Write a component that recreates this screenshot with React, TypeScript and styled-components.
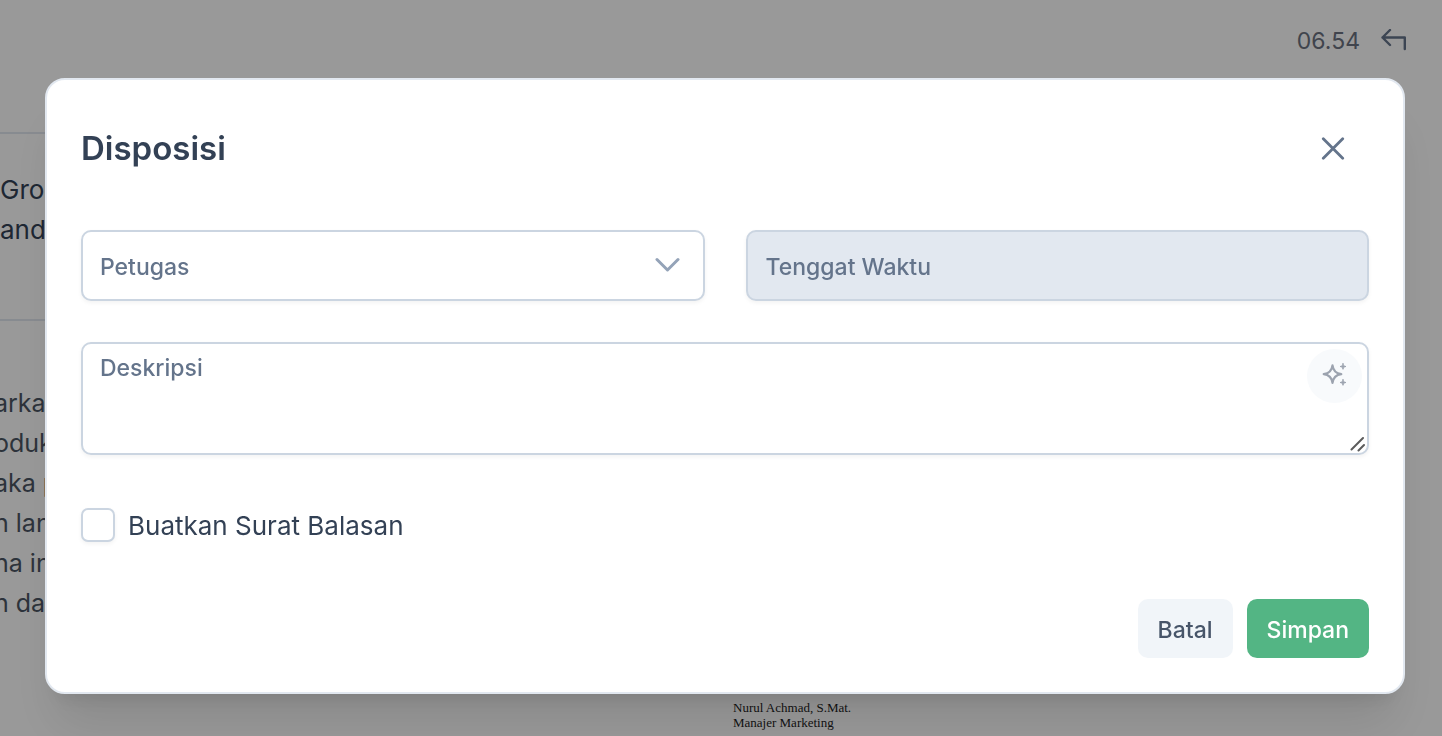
import React from "react";
import styled, { createGlobalStyle } from "styled-components";

const GlobalStyle = createGlobalStyle`
  *, *::before, *::after { box-sizing: border-box; }
  body {
    margin: 0;
    background: #ffffff;
    font-family: Inter, "Liberation Sans", sans-serif;
    overflow: hidden;
  }
  button, input, select, textarea { font: inherit; }
`;

const Page = styled.main`
  display: flex;
  flex-direction: column;
  min-height: 100vh;
  overflow: hidden;
`;

const MailMeta = styled.header`
  display: flex;
  align-items: center;
  justify-content: flex-end;
  gap: 20px;
  height: 132px;
  padding: 0 34px 50px 0;
  color: #6b7280;
`;

const Time = styled.time`
  font-size: 23px;
  line-height: 32px;
`;

const ReplyButton = styled.button`
  display: flex;
  padding: 0;
  border: 0;
  background: none;
  color: #64748b;
`;

const Recipients = styled.section`
  height: 189px;
  margin-right: 74px;
  padding-top: 36px;
  border: solid #e2e8f0;
  border-width: 2px 0;
  color: #334155;
  font-size: 26px;
  line-height: 40px;
`;

const MailBody = styled.section`
  height: 379px;
  margin-left: -6px;
  padding-top: 62px;
  color: #4b5563;
  font-size: 25px;
  line-height: 40px;
`;

const TextLine = styled.div`
  white-space: nowrap;
`;

const Signature = styled.address`
  align-self: center;
  width: 117px;
  margin-left: 141px;
  color: #1c1c1c;
  font-family: "Liberation Serif", serif;
  font-size: 13px;
  font-style: normal;
  line-height: 15px;
  white-space: nowrap;
`;

const Overlay = styled.div`
  position: fixed;
  inset: 0;
  display: flex;
  align-items: flex-start;
  padding: 78px 37px 42px 45px;
  background: rgba(0, 0, 0, 0.4);
`;

const Dialog = styled.form`
  flex: 1;
  display: flex;
  flex-direction: column;
  padding: 34px;
  border: 2px solid #e2e8f0;
  border-radius: 20px;
  background: #ffffff;
  box-shadow: 0 40px 50px -10px rgba(0, 0, 0, 0.1), 0 16px 20px -12px rgba(0, 0, 0, 0.1);
  color: #334155;
`;

const DialogHeader = styled.header`
  display: flex;
  align-items: center;
  justify-content: space-between;
  height: 68px;
  margin-bottom: 48px;
`;

const Title = styled.h2`
  margin: 0;
  font-size: 33px;
  font-weight: 600;
  line-height: 48px;
`;

const CloseButton = styled.button`
  display: flex;
  align-items: center;
  justify-content: center;
  width: 72px;
  height: 68px;
  padding: 0;
  border: 0;
  background: none;
  color: #64748b;
`;

const FieldRow = styled.div`
  display: grid;
  grid-template-columns: 1fr 1fr;
  gap: 41px;
  margin-bottom: 41px;
`;

const Field = styled.div`
  position: relative;
  display: flex;
`;

const controlLook = `
  width: 100%;
  margin: 0;
  border: 2px solid #cbd5e1;
  border-radius: 10px;
  background: #ffffff;
  box-shadow: 0 2px 4px rgba(18, 18, 23, 0.05);
  color: #64748b;
  font-size: 23px;
  font-weight: 500;
  line-height: 32px;
  outline: none;
  &::placeholder { color: #64748b; opacity: 1; }
`;

const Select = styled.select`
  ${controlLook}
  height: 71px;
  padding: 2px 64px 0 17px;
  appearance: none;
`;

const Input = styled.input`
  ${controlLook}
  height: 71px;
  padding: 2px 18px 0;
  &:disabled { background: #e2e8f0; }
`;

const TextArea = styled.textarea`
  ${controlLook}
  height: 113px;
  padding: 8px 64px 8px 17px;
  resize: none;
`;

const Chevron = styled.svg`
  position: absolute;
  top: 27px;
  right: 25px;
  color: #94a3b8;
  pointer-events: none;
`;

const AssistButton = styled.button`
  position: absolute;
  top: 7px;
  right: 7px;
  display: flex;
  align-items: center;
  justify-content: center;
  width: 55px;
  height: 54px;
  padding: 0;
  border: 0;
  border-radius: 50%;
  background: #f8fafc;
  color: #9ca3af;
`;

const ResizeGrip = styled.svg`
  position: absolute;
  right: 4px;
  bottom: 3px;
  pointer-events: none;
`;

const CheckRow = styled.div`
  display: flex;
  align-items: center;
  gap: 13px;
  height: 40px;
  margin: 50px 0 54px;
`;

const Checkbox = styled.input`
  width: 34px;
  height: 34px;
  margin: 0;
  appearance: none;
  border: 2px solid #cbd5e1;
  border-radius: 7px;
  background: #ffffff;
  box-shadow: 0 2px 4px rgba(18, 18, 23, 0.05);
  &:checked { background: #53b584; border-color: #53b584; }
`;

const CheckLabel = styled.label`
  padding-top: 2px;
  font-size: 26px;
  line-height: 40px;
`;

const Actions = styled.footer`
  display: flex;
  justify-content: flex-end;
  gap: 14px;
`;

const ActionButton = styled.button<{ $primary?: boolean }>`
  height: 59px;
  padding: 2px 20px 0;
  border: 0;
  border-radius: 10px;
  background: ${(p) => (p.$primary ? "#53b584" : "#f1f5f9")};
  color: ${(p) => (p.$primary ? "#ffffff" : "#475569")};
  font-size: 23px;
  font-weight: 500;
  line-height: 32px;
`;

const bodyLines = ["arka", "oduk", "aka p", "n lan", "na in", "n da"];

export default function App() {
  return (
    <>
      <GlobalStyle />
      <Page>
        <MailMeta>
          <Time>06.54</Time>
          <ReplyButton type="button" aria-label="Balas">
            <svg width="28" height="24" viewBox="0 0 28 24" fill="none" stroke="currentColor" strokeWidth="2.4" strokeLinecap="round" strokeLinejoin="round">
              <path d="M10 1 2.500 8.500 10 16M2.500 8.500H24.800v11.500" />
            </svg>
          </ReplyButton>
        </MailMeta>
        <Recipients>
          <TextLine>Gro</TextLine>
          <TextLine>and</TextLine>
        </Recipients>
        <MailBody>
          {bodyLines.map((line) => (
            <TextLine key={line}>{line}</TextLine>
          ))}
        </MailBody>
        <Signature>
          Nurul Achmad, S.Mat.
          <br />
          Manajer Marketing
        </Signature>
      </Page>
      <Overlay>
        <Dialog role="dialog" aria-labelledby="dialog-title" onSubmit={(e) => e.preventDefault()}>
          <DialogHeader>
            <Title id="dialog-title">Disposisi</Title>
            <CloseButton type="button" aria-label="Tutup">
              <svg width="24" height="24" viewBox="0 0 24 24" fill="none" stroke="currentColor" strokeWidth="2.8" strokeLinecap="round">
                <path d="M2.300 2.800 21.700 22.200M21.700 2.800 2.300 22.200" />
              </svg>
            </CloseButton>
          </DialogHeader>
          <FieldRow>
            <Field>
              <Select aria-label="Petugas" defaultValue="">
                <option value="">Petugas</option>
              </Select>
              <Chevron width="26" height="16" viewBox="0 0 26 16" fill="none" stroke="currentColor" strokeWidth="3" strokeLinecap="round" strokeLinejoin="round">
                <path d="m3 2.500 10.500 10.500L24 2.500" />
              </Chevron>
            </Field>
            <Field>
              <Input aria-label="Tenggat Waktu" placeholder="Tenggat Waktu" disabled />
            </Field>
          </FieldRow>
          <Field>
            <TextArea aria-label="Deskripsi" placeholder="Deskripsi" />
            <AssistButton type="button" aria-label="Bantuan AI">
              <svg width="28" height="28" viewBox="0 0 28 28" fill="none" stroke="currentColor" strokeWidth="2.200" strokeLinecap="round" strokeLinejoin="round">
                <path d="M11.500 3.400c.6 5.300 3.200 8 8.800 8.800-5.600.8-8.200 3.500-8.800 8.800-.6-5.300-3.200-8-8.800-8.800 5.600-.8 8.200-3.500 8.800-8.800Z" />
                <path d="M22 1.700c.3 1.900.9 2.500 2.900 2.800-2 .3-2.600.9-2.900 2.800-.3-1.900-.9-2.500-2.900-2.800 2-.3 2.600-.9 2.900-2.800ZM22 17.700c.3 1.900.9 2.500 2.900 2.800-2 .3-2.600.9-2.900 2.800-.3-1.900-.9-2.500-2.900-2.800 2-.3 2.600-.9 2.900-2.800Z" fill="currentColor" strokeWidth="1" />
              </svg>
            </AssistButton>
            <ResizeGrip width="16" height="16" viewBox="0 0 16 16" stroke="#5c5c5c" strokeWidth="2" strokeLinecap="round">
              <path d="M2.500 13.500 14 2M9.500 14.500 15 9" />
            </ResizeGrip>
          </Field>
          <CheckRow>
            <Checkbox type="checkbox" id="reply-letter" />
            <CheckLabel htmlFor="reply-letter">Buatkan Surat Balasan</CheckLabel>
          </CheckRow>
          <Actions>
            <ActionButton type="button">Batal</ActionButton>
            <ActionButton type="submit" $primary>
              Simpan
            </ActionButton>
          </Actions>
        </Dialog>
      </Overlay>
    </>
  );
}
